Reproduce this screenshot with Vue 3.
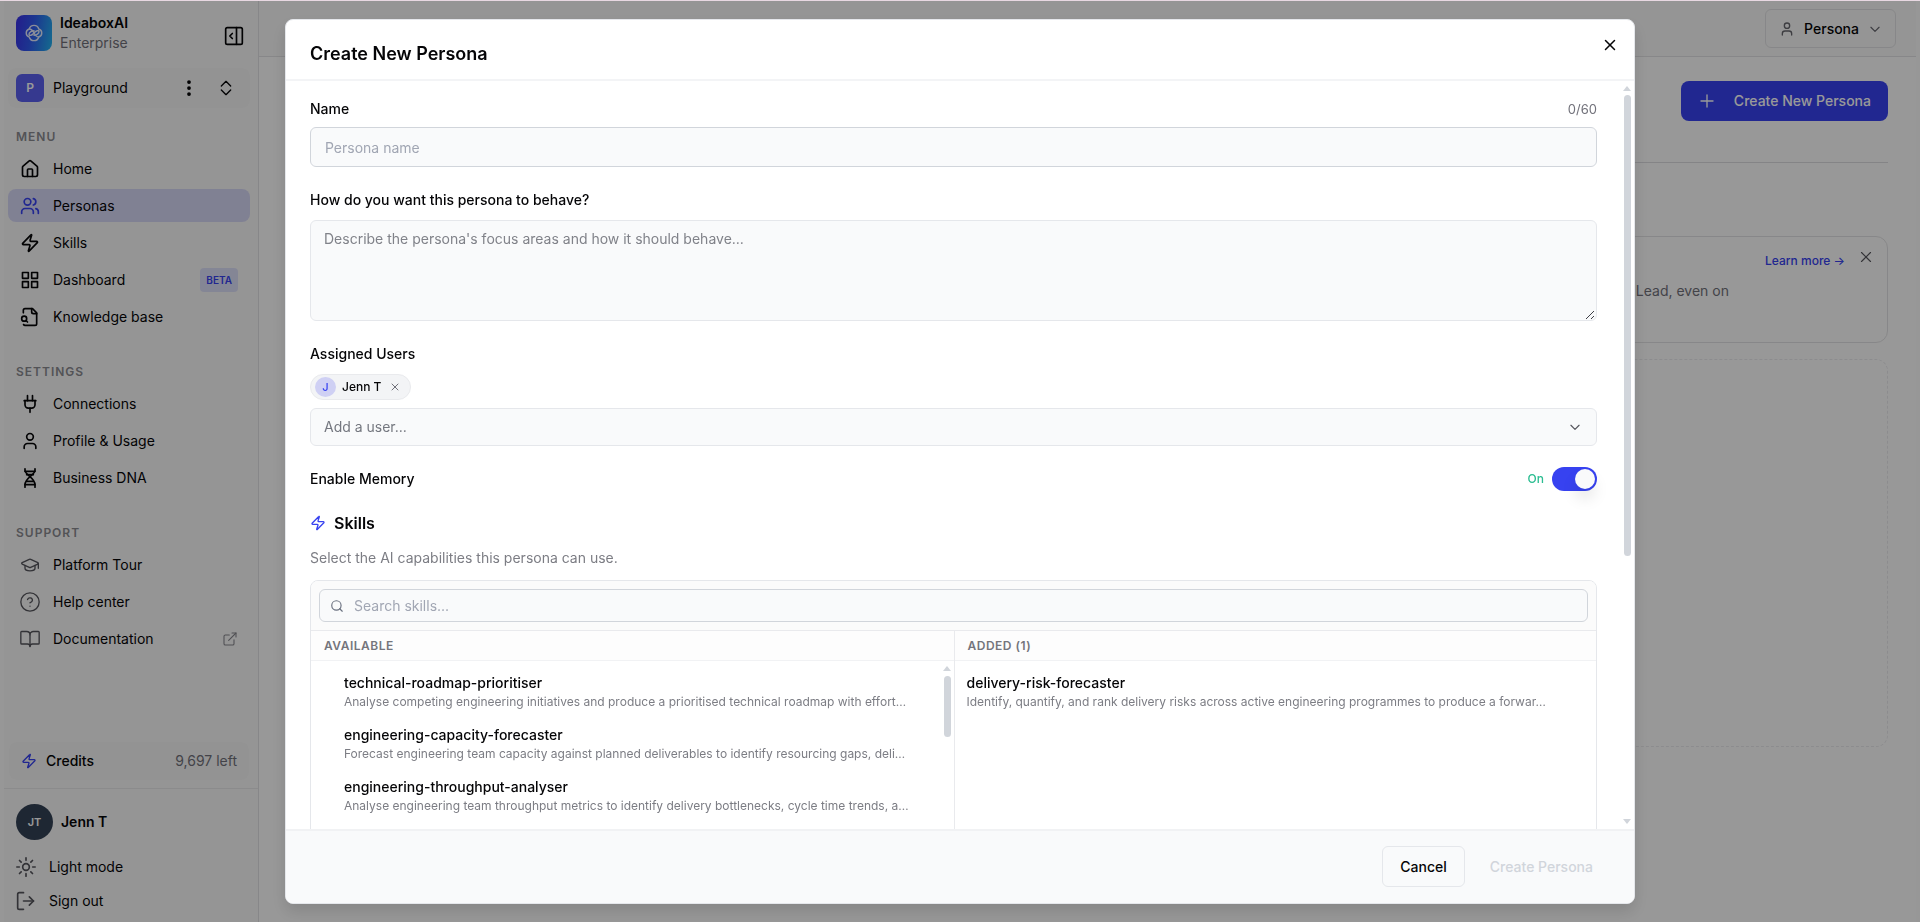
<script setup>
import { ref } from 'vue'

const icons = {
  home: '<path d="M15 21v-8a1 1 0 0 0-1-1h-4a1 1 0 0 0-1 1v8"/><path d="M3 10a2 2 0 0 1 .709-1.528l7-5.999a2 2 0 0 1 2.582 0l7 5.999A2 2 0 0 1 21 10v9a2 2 0 0 1-2 2H5a2 2 0 0 1-2-2z"/>',
  users: '<path d="M16 21v-2a4 4 0 0 0-4-4H6a4 4 0 0 0-4 4v2"/><circle cx="9" cy="7" r="4"/><path d="M22 21v-2a4 4 0 0 0-3-3.87"/><path d="M16 3.13a4 4 0 0 1 0 7.75"/>',
  zap: '<path d="M4 14a1 1 0 0 1-.78-1.63l9.9-10.2a.5.5 0 0 1 .86.46l-1.92 6.02A1 1 0 0 0 13 10h7a1 1 0 0 1 .78 1.63l-9.9 10.2a.5.5 0 0 1-.86-.46l1.92-6.02A1 1 0 0 0 11 14z"/>',
  grid: '<rect x="3" y="3" width="7" height="7"/><rect x="14" y="3" width="7" height="7"/><rect x="3" y="14" width="7" height="7"/><rect x="14" y="14" width="7" height="7"/>',
  fileSearch: '<path d="M14 2v4a2 2 0 0 0 2 2h4"/><path d="M4.268 21a2 2 0 0 0 1.727 1H18a2 2 0 0 0 2-2V7l-5-5H6a2 2 0 0 0-2 2v3"/><path d="m9 18-1.5-1.5"/><circle cx="5" cy="14" r="3"/>',
  plug: '<path d="M12 22v-5"/><path d="M9 8V2"/><path d="M15 8V2"/><path d="M5 8h14"/><path d="M18 8v5a4 4 0 0 1-4 4h-4a4 4 0 0 1-4-4V8"/>',
  user: '<path d="M19 21v-2a4 4 0 0 0-4-4H9a4 4 0 0 0-4 4v2"/><circle cx="12" cy="7" r="4"/>',
  dna: '<path d="M6 1v2c0 5 12 9 12 17v3"/><path d="M18 1v2c0 5-12 9-12 17v3"/><path d="M6 4h12"/><path d="M8 8h8"/><path d="M8 16h8"/><path d="M6 20h12"/>',
  cap: '<path d="M21.42 10.922a1 1 0 0 0-.019-1.838L12.83 5.18a2 2 0 0 0-1.66 0L2.6 9.08a1 1 0 0 0 0 1.832l8.57 3.908a2 2 0 0 0 1.66 0z"/><path d="M22 10v6"/><path d="M6 12.5V16a6 3 0 0 0 12 0v-3.5"/>',
  help: '<circle cx="12" cy="12" r="11"/><path d="M9.09 9a3 3 0 0 1 5.83 1c0 2-3 3-3 3"/><path d="M12 17h.01"/>',
  book: '<path d="M12 7v14"/><path d="M2 18a1 1 0 0 1-1-1V4a1 1 0 0 1 1-1h6a4 4 0 0 1 4 4 4 4 0 0 1 4-4h6a1 1 0 0 1 1 1v13a1 1 0 0 1-1 1h-7a3 3 0 0 0-3 3 3 3 0 0 0-3-3z"/>',
  external: '<path d="M15 3h6v6"/><path d="M10 14 21 3"/><path d="M18 13v6a2 2 0 0 1-2 2H5a2 2 0 0 1-2-2V8a2 2 0 0 1 2-2h6"/>',
  sun: '<circle cx="12" cy="12" r="4"/><path d="M12 1v3M12 20v3M4.2 4.2l2 2M17.8 17.8l2 2M1 12h3M20 12h3M6.2 17.8l-2 2M19.8 4.2l-2 2"/>',
  logout: '<path d="m16 17 5-5-5-5"/><path d="M21 12H9"/><path d="M9 22H4a2 2 0 0 1-2-2V4a2 2 0 0 1 2-2h5"/>',
  chevron: '<path d="m5 9 7 7 7-7"/>',
  close: '<path d="M18 6 6 18"/><path d="m6 6 12 12"/>',
  plus: '<path d="M4 12h16"/><path d="M12 4v16"/>',
  search: '<circle cx="11" cy="11" r="8"/><path d="m21 21-4.3-4.3"/>',
  panel: '<rect x="2" y="2" width="20" height="20" rx="2"/><path d="M15 2v20"/><path d="m10 9-3 3 3 3"/>',
  dots: '<g fill="currentColor"><circle cx="12" cy="4" r="1.5"/><circle cx="12" cy="12" r="1.5"/><circle cx="12" cy="20" r="1.5"/></g>',
  updown: '<path d="m5 9 7-7 7 7"/><path d="m5 15 7 7 7-7"/>',
  brand: '<path d="M6.3 7.2A5.9 5.9 0 0 1 17.7 7.2 5 5 0 0 1 17.7 16.8 5.9 5.9 0 0 1 6.3 16.8 5 5 0 0 1 6.3 7.2z"/><path d="M6.3 7.2c2 0 3.6.8 5.7 4.8s3.700 4.800 5.700 4.800"/><path d="M12 12c-2 2.800-6 4-6 1.500s4-4.300 6-4.300M12 12c2-2.800 6-4 6-1.500s-4 4.300-6 4.300"/>',
}

const groups = [
  {
    label: 'MENU',
    items: [
      { text: 'Home', icon: 'home' },
      { text: 'Personas', icon: 'users', active: true },
      { text: 'Skills', icon: 'zap' },
      { text: 'Dashboard', icon: 'grid', badge: 'BETA' },
      { text: 'Knowledge base', icon: 'fileSearch' },
    ],
  },
  {
    label: 'SETTINGS',
    items: [
      { text: 'Connections', icon: 'plug' },
      { text: 'Profile & Usage', icon: 'user' },
      { text: 'Business DNA', icon: 'dna' },
    ],
  },
  {
    label: 'SUPPORT',
    muted: true,
    items: [
      { text: 'Platform Tour', icon: 'cap' },
      { text: 'Help center', icon: 'help' },
      { text: 'Documentation', icon: 'book', external: true },
    ],
  },
]

const available = [
  { name: 'technical-roadmap-prioritiser', desc: 'Analyse competing engineering initiatives and produce a prioritised technical roadmap with effort…' },
  { name: 'engineering-capacity-forecaster', desc: 'Forecast engineering team capacity against planned deliverables to identify resourcing gaps, deli…' },
  { name: 'engineering-throughput-analyser', desc: 'Analyse engineering team throughput metrics to identify delivery bottlenecks, cycle time trends, a…' },
]
const added = [
  { name: 'delivery-risk-forecaster', desc: 'Identify, quantify, and rank delivery risks across active engineering programmes to produce a forwar…' },
]

const name = ref('')
const behaviour = ref('')
const query = ref('')
const memory = ref(true)
</script>

<template>
  <div class="page">
    <aside class="sidebar">
      <div class="brand">
        <span class="brand-logo"><svg class="icon i20" viewBox="0 0 24 24" v-html="icons.brand"></svg></span>
        <div class="brand-text">
          <strong>IdeaboxAI</strong>
          <span>Enterprise</span>
        </div>
        <button class="plain collapse" aria-label="Collapse sidebar"><svg class="icon i20" viewBox="0 0 24 24" v-html="icons.panel"></svg></button>
      </div>

      <div class="workspace">
        <span class="workspace-badge">P</span>
        <span class="workspace-name">Playground</span>
        <button class="plain" aria-label="Workspace options"><svg class="icon i18" viewBox="0 0 24 24" v-html="icons.dots"></svg></button>
        <button class="plain" aria-label="Switch workspace"><svg class="icon i16" viewBox="0 0 24 24" v-html="icons.updown"></svg></button>
      </div>

      <nav class="nav">
        <section v-for="g in groups" :key="g.label" class="nav-group" :class="{ muted: g.muted }">
          <h2>{{ g.label }}</h2>
          <a v-for="i in g.items" :key="i.text" href="#" class="nav-item" :class="{ active: i.active }">
            <svg class="icon i20" viewBox="0 0 24 24" v-html="icons[i.icon]"></svg>
            <span class="grow">{{ i.text }}</span>
            <span v-if="i.badge" class="badge">{{ i.badge }}</span>
            <svg v-if="i.external" class="icon i16 ext" viewBox="0 0 24 24" v-html="icons.external"></svg>
          </a>
        </section>
      </nav>

      <div class="credits">
        <svg class="icon i16 accent" viewBox="0 0 24 24" v-html="icons.zap"></svg>
        <span class="grow">Credits</span>
        <span class="credits-left">9,697 left</span>
      </div>
      <div class="account">
        <div class="profile"><span class="avatar">JT</span><strong>Jenn T</strong></div>
        <button class="plain account-row"><svg class="icon i20" viewBox="0 0 24 24" v-html="icons.sun"></svg>Light mode</button>
        <button class="plain account-row"><svg class="icon i20" viewBox="0 0 24 24" v-html="icons.logout"></svg>Sign out</button>
      </div>
    </aside>

    <main class="main">
      <header class="topbar">
        <button class="persona-btn">
          <svg class="icon i16" viewBox="0 0 24 24" v-html="icons.user"></svg>
          Persona
          <svg class="icon i14" viewBox="0 0 24 24" v-html="icons.chevron"></svg>
        </button>
      </header>
      <div class="content">
        <div class="content-head">
          <button class="create-btn"><svg class="icon i18" viewBox="0 0 24 24" v-html="icons.plus"></svg>Create New Persona</button>
        </div>
        <div class="notice">
          <div class="notice-actions">
            <a href="#">Learn more →</a>
            <button class="plain" aria-label="Dismiss"><svg class="icon i18 thin" viewBox="0 0 24 24" v-html="icons.close"></svg></button>
          </div>
          <p>Lead, even on</p>
        </div>
        <div class="empty"></div>
      </div>
    </main>

    <div class="overlay">
      <div class="modal" role="dialog" aria-modal="true" aria-labelledby="dialog-title">
        <header class="modal-head">
          <h1 id="dialog-title">Create New Persona</h1>
          <button class="plain close" aria-label="Close"><svg class="icon i18" viewBox="0 0 24 24" v-html="icons.close"></svg></button>
        </header>

        <div class="modal-body">
          <form class="form" @submit.prevent>
            <div class="field">
              <div class="row">
                <label for="persona-name">Name</label>
                <span class="counter">{{ name.length }}/60</span>
              </div>
              <input id="persona-name" v-model="name" class="text-input" type="text" maxlength="60" placeholder="Persona name" />
            </div>

            <div class="field behave-field">
              <label for="persona-behave">How do you want this persona to behave?</label>
              <div class="area-wrap">
                <textarea id="persona-behave" v-model="behaviour" placeholder="Describe the persona's focus areas and how it should behave..."></textarea>
                <svg class="grip" viewBox="0 0 10 10"><path d="M1 9 9 1M6 9l3-3" /></svg>
              </div>
            </div>

            <div class="field users-field">
              <label for="persona-user">Assigned Users</label>
              <div class="chip">
                <span class="chip-avatar">J</span>
                <span>Jenn T</span>
                <button type="button" class="plain" aria-label="Remove Jenn T"><svg class="icon i12" viewBox="0 0 24 24" v-html="icons.close"></svg></button>
              </div>
              <div class="select-wrap">
                <select id="persona-user"><option>Add a user...</option></select>
                <svg class="icon i14 select-chevron" viewBox="0 0 24 24" v-html="icons.chevron"></svg>
              </div>
            </div>

            <div class="row memory">
              <label for="persona-memory">Enable Memory</label>
              <span class="memory-state">
                <span>{{ memory ? 'On' : 'Off' }}</span>
                <input id="persona-memory" v-model="memory" class="toggle" type="checkbox" role="switch" />
              </span>
            </div>

            <h2 class="skills-title"><svg class="icon i16 accent" viewBox="0 0 24 24" v-html="icons.zap"></svg>Skills</h2>
            <p class="skills-hint">Select the AI capabilities this persona can use.</p>

            <div class="skills">
              <div class="skills-search">
                <div class="search-box">
                  <svg class="icon i14" viewBox="0 0 24 24" v-html="icons.search"></svg>
                  <input v-model="query" type="text" aria-label="Search skills" placeholder="Search skills..." />
                </div>
              </div>
              <div class="columns">
                <section class="column">
                  <h3>AVAILABLE</h3>
                  <div class="column-body">
                    <ul class="list indented">
                      <li v-for="s in available" :key="s.name"><strong>{{ s.name }}</strong><span>{{ s.desc }}</span></li>
                    </ul>
                    <div class="scroller slim" aria-hidden="true"><i class="up"></i><i class="thumb"></i></div>
                  </div>
                </section>
                <section class="column">
                  <h3>ADDED (1)</h3>
                  <div class="column-body">
                    <ul class="list">
                      <li v-for="s in added" :key="s.name"><strong>{{ s.name }}</strong><span>{{ s.desc }}</span></li>
                    </ul>
                  </div>
                </section>
              </div>
            </div>
          </form>
          <div class="scroller" aria-hidden="true"><i class="up"></i><div class="track"><i class="thumb"></i></div><i class="down"></i></div>
        </div>

        <footer class="modal-foot">
          <button class="cancel">Cancel</button>
          <button class="submit" disabled>Create Persona</button>
        </footer>
      </div>
    </div>
  </div>
</template>

<style>
body {
  background: #fff;
}
</style>

<style scoped>
* {
  box-sizing: border-box;
}
.page {
  display: flex;
  height: 100vh;
  min-height: 600px;
  padding: 0 4px;
  overflow: hidden;
  border-top: 1px solid #e8d8e2;
  background: #fcfcfc;
  color: #050507;
  font: 14px/20px Inter, "Liberation Sans", sans-serif;
}
h1, h2, h3, p, ul {
  margin: 0;
  padding: 0;
}
button, input, textarea, select {
  font: inherit;
  color: inherit;
}
a {
  color: inherit;
  text-decoration: none;
}
.plain {
  display: flex;
  align-items: center;
  padding: 0;
  border: 0;
  background: none;
}
.grow {
  flex: 1;
}
.icon {
  flex: none;
  display: block;
  fill: none;
  stroke: currentColor;
  stroke-width: 2;
  stroke-linecap: round;
  stroke-linejoin: round;
}
.thin { stroke-width: 1.5; }
.i12 { width: 12px; height: 12px; }
.i14 { width: 14px; height: 14px; }
.i16 { width: 16px; height: 16px; }
.i18 { width: 18px; height: 18px; }
.i20 { width: 20px; height: 20px; }
.accent { color: #3742f0; }

/* Sidebar */
.sidebar {
  flex: none;
  display: flex;
  flex-direction: column;
  width: 255px;
  border-right: 1px solid #e2e2e4;
  background: #f9f9f9;
}
.brand {
  display: flex;
  align-items: center;
  gap: 8px;
  padding: 12px 14px 0 12px;
}
.brand-logo {
  display: flex;
  align-items: center;
  justify-content: center;
  width: 36px;
  height: 36px;
  border-radius: 8px;
  background: linear-gradient(100deg, #3d2fe8, #2f5af0 45%, #22b4ee);
  color: #e6ecff;
}
.brand-logo .icon { stroke-width: 1.7; }
.brand-text {
  flex: 1;
  display: flex;
  flex-direction: column;
}
.brand-text strong { font-weight: 600; }
.brand-text span { color: #71717a; }
.collapse { padding-top: 6px; }
.workspace {
  display: flex;
  align-items: center;
  gap: 20px;
  height: 40px;
  margin: 15px 8px 0 4px;
  padding: 0 16px 0 8px;
  border-radius: 8px;
  background: #f6f6f6;
}
.workspace-name {
  flex: 1;
  margin-left: -11px;
}
.workspace-badge {
  display: flex;
  align-items: center;
  justify-content: center;
  width: 28px;
  height: 28px;
  border-radius: 6px;
  background: #5b60ee;
  color: #fff;
  font-size: 12px;
  font-weight: 600;
}
.nav {
  flex: 1;
  padding: 19px 8px 0 4px;
}
.nav-group {
  display: flex;
  flex-direction: column;
  gap: 4px;
  margin-bottom: 29px;
}
.nav-group h2 {
  padding: 0 8px;
  margin-bottom: 1px;
  color: #8a8a90;
  font-size: 12px;
  font-weight: 600;
  letter-spacing: 1px;
}
.nav-item {
  display: flex;
  align-items: center;
  gap: 13px;
  height: 33px;
  padding: 0 12px;
  border-radius: 8px;
}
.nav-item.active { background: #d6d7f6; }
.active .icon { color: #3742f0; }
.muted .icon { color: #55555c; stroke-width: 1.6; }
.muted .ext { color: #85858c; }
.badge {
  padding: 2px 6px;
  border-radius: 4px;
  background: #dddff8;
  color: #3742f0;
  font-size: 10px;
  font-weight: 600;
}
.credits {
  display: flex;
  align-items: center;
  gap: 9px;
  height: 38px;
  margin: 0 9px 8px 5px;
  padding: 0 12px;
  border-radius: 8px;
  background: #f6f6f6;
  font-weight: 500;
}
.credits-left {
  color: #71717a;
  font-weight: 400;
}
.account {
  display: flex;
  flex-direction: column;
  gap: 14px;
  padding: 15px 12px 11px;
  border-top: 1px solid #e8e8ea;
}
.profile {
  display: flex;
  align-items: center;
  gap: 8px;
  margin-bottom: 3px;
}
.profile strong { font-weight: 600; }
.avatar {
  display: flex;
  align-items: center;
  justify-content: center;
  width: 37px;
  height: 36px;
  border-radius: 50%;
  background: #334155;
  color: #fff;
  font-size: 11px;
  font-weight: 600;
}
.account-row { gap: 13px; }
.account-row .icon { color: #55555c; }

/* Page behind the dialog */
.main {
  flex: 1;
  min-width: 0;
  background: #fefefe;
}
.topbar {
  display: flex;
  align-items: flex-start;
  justify-content: flex-end;
  height: 56px;
  padding: 8px 20px 0;
  border-bottom: 1px solid #e2e2e4;
  background: #f9f9f9;
}
.persona-btn {
  display: flex;
  align-items: center;
  gap: 8px;
  height: 39px;
  padding: 0 12px;
  border: 1px solid #e2e2e4;
  border-radius: 6px;
  background: none;
  font-weight: 500;
}
.persona-btn .icon {
  color: #66666d;
  margin: 0 1px;
}
.content { padding: 24px 28px 0; }
.content-head {
  display: flex;
  justify-content: flex-end;
  padding-bottom: 41px;
  border-bottom: 1px solid #dcdce0;
}
.create-btn {
  display: flex;
  align-items: center;
  gap: 18px;
  height: 40px;
  padding: 0 17px;
  border: 0;
  border-radius: 8px;
  background: #3742f0;
  color: #fff;
  font-weight: 500;
}
.create-btn .icon { stroke-width: 1.8; }
.notice {
  height: 107px;
  margin-top: 73px;
  padding: 11px 12px;
  border: 1px solid #e2e2e4;
  border-radius: 12px;
}
.notice-actions {
  display: flex;
  justify-content: flex-end;
  gap: 12px;
}
.notice-actions a {
  padding-top: 3px;
  color: #3742f0;
  font-size: 12px;
  font-weight: 500;
}
.notice-actions button {
  height: 18px;
  color: #55555c;
}
.notice p {
  padding: 10px 146px 0 0;
  color: #71717a;
  text-align: right;
}
.empty {
  height: 388px;
  margin-top: 16px;
  border: 1px dashed #eaeaed;
  border-radius: 12px;
}

/* Dialog */
.overlay {
  position: fixed;
  inset: 1px 0 0;
  display: flex;
  padding: 18px 285px;
  background: rgba(0, 0, 0, 0.4);
}
.modal {
  flex: 1;
  display: flex;
  flex-direction: column;
  min-width: 0;
  overflow: hidden;
  border: 1px solid #e5e7eb;
  border-radius: 8px;
  background: #fff;
  box-shadow: 0 8px 16px rgba(0, 0, 0, 0.12);
}
.modal-head {
  display: flex;
  justify-content: space-between;
  padding: 16px 15px 8px 24px;
  border-bottom: 2px solid #f3f4f6;
}
.modal-head h1 {
  font-size: 18px;
  font-weight: 600;
  line-height: 35px;
}
.close { height: 18px; }
.modal-body {
  flex: 1;
  display: flex;
  min-height: 0;
}
.form {
  flex: 1;
  min-width: 0;
  overflow: hidden;
  padding: 18px 26px 0 24px;
}
.row {
  display: flex;
  align-items: center;
  justify-content: space-between;
}
.form label { font-weight: 500; }
.field {
  display: flex;
  flex-direction: column;
}
.counter {
  color: #71717a;
  font-size: 13px;
}
.text-input {
  height: 40px;
  margin-top: 8px;
  padding: 0 14px;
  border: 1px solid #d1d5db;
  border-radius: 6px;
  background: #f9fafb;
}
::placeholder { color: #a1a6b3; opacity: 1; }
.behave-field { margin-top: 23px; }
.area-wrap {
  position: relative;
  display: flex;
  margin-top: 10px;
}
textarea {
  flex: 1;
  height: 101px;
  padding: 8px 13px;
  border: 1px solid #e5e7eb;
  border-radius: 6px;
  background: #f9fafb;
  resize: none;
}
textarea::placeholder { color: #808289; }
.grip {
  position: absolute;
  right: 2px;
  bottom: 1px;
  width: 10px;
  height: 10px;
  stroke: #3f3f46;
  stroke-width: 1;
}
.users-field { margin-top: 23px; }
.chip {
  display: flex;
  align-items: center;
  gap: 6px;
  align-self: flex-start;
  height: 26px;
  margin: 10px 0 8px;
  padding: 0 9px 0 4px;
  border: 1px solid #e9eaed;
  border-radius: 13px;
  background: #f3f4f6;
  font-size: 12px;
  font-weight: 500;
}
.chip .plain { margin-left: 2px; color: #71717a; }
.chip-avatar {
  width: 21px;
  height: 20px;
  border-radius: 50%;
  background: #cfd0f4;
  color: #3742f0;
  font-size: 11px;
  text-align: center;
}
.select-wrap {
  position: relative;
  display: flex;
}
select {
  flex: 1;
  appearance: none;
  height: 38px;
  padding: 0 13px;
  border: 1px solid #e5e7eb;
  border-radius: 6px;
  background: #f9fafb;
  color: #74777f;
}
.select-chevron {
  position: absolute;
  top: 12px;
  right: 15px;
  color: #55555c;
  pointer-events: none;
}
.memory { margin-top: 21px; }
.memory-state {
  display: flex;
  align-items: center;
  gap: 8px;
  color: #2bbd91;
  font-size: 12px;
  font-weight: 500;
}
.toggle {
  appearance: none;
  display: flex;
  align-items: center;
  width: 45px;
  height: 24px;
  margin: 0;
  padding: 0 2px;
  border-radius: 12px;
  background: #c9ccd4;
}
.toggle::before {
  content: "";
  width: 20px;
  height: 20px;
  border-radius: 50%;
  background: #f9fafb;
  box-shadow: 0 10px 15px rgba(0, 0, 0, 0.1);
}
.toggle:checked {
  justify-content: flex-end;
  background: #3742f0;
}
.skills-title {
  display: flex;
  align-items: center;
  gap: 8px;
  margin-top: 20px;
  font-size: 16px;
  font-weight: 600;
  line-height: 24px;
}
.skills-hint {
  margin-top: 13px;
  color: #7c7d84;
}
.skills {
  margin-top: 12px;
  border: 1px solid #e5e7eb;
  border-radius: 8px;
  overflow: hidden;
}
.skills-search {
  padding: 8px;
  border-bottom: 1px solid #e9eaed;
  background: #fbfbfb;
}
.search-box {
  display: flex;
  align-items: center;
  gap: 10px;
  height: 33px;
  padding: 0 10px;
  border: 1px solid #d1d5db;
  border-radius: 6px;
  background: #f9fafb;
  color: #6b7280;
}
.search-box input {
  flex: 1;
  min-width: 0;
  padding: 0;
  border: 0;
  background: none;
  outline: 0;
}
.columns {
  display: grid;
  grid-template-columns: 1fr 1fr;
  height: 300px;
}
.column {
  min-width: 0;
  display: flex;
  flex-direction: column;
}
.column + .column { border-left: 1px solid #e9eaed; }
.column h3 {
  height: 30px;
  padding: 0 13px;
  border-bottom: 1px solid #f1f2f4;
  background: #fdfdfd;
  color: #74757c;
  font-size: 12px;
  font-weight: 600;
  line-height: 29px;
  letter-spacing: 0.5px;
}
.column-body {
  flex: 1;
  display: flex;
  min-height: 0;
}
.list {
  flex: 1;
  min-width: 0;
  padding: 12px 12px 0;
  list-style: none;
}
.list.indented { padding: 12px 0 0 33px; }
.list li {
  height: 52px;
  white-space: nowrap;
}
.list strong, .list span {
  display: block;
  overflow: hidden;
}
.list strong { font-weight: 500; }
.list span {
  color: #7c7d84;
  font-size: 12px;
  line-height: 18px;
}

/* Scroll indicators */
.scroller {
  flex: none;
  display: flex;
  flex-direction: column;
  align-items: center;
  width: 11px;
  padding: 5px 3px 5px 0;
}
.slim { padding-right: 2px; }
.up, .down {
  flex: none;
  border: 4px solid transparent;
}
.up {
  border-top: 0;
  border-bottom: 5px solid #d1d5db;
}
.down {
  border-bottom: 0;
  border-top: 5px solid #d1d5db;
}
.track {
  flex: 1;
  margin: 4px 0;
}
.thumb {
  display: block;
  width: 7px;
  height: 64%;
  border-radius: 4px;
  background: #d1d5db;
}
.slim .thumb {
  height: 61px;
  margin-top: 5px;
}

.modal-foot {
  display: flex;
  justify-content: flex-end;
  gap: 8px;
  padding: 15px 24px 16px;
  border-top: 2px solid #f1f2f4;
  background: #f9fafb;
}
.modal-foot button {
  height: 41px;
  padding: 0 16px;
  border: 1px solid transparent;
  border-radius: 6px;
  background: none;
  font-weight: 500;
}
.modal-foot .cancel {
  padding: 0 17px;
  border-color: #e5e7eb;
}
.modal-foot .submit { color: #d1d5db; }

@media (max-width: 1200px) {
  .overlay { padding: 18px 16px; }
}
</style>
